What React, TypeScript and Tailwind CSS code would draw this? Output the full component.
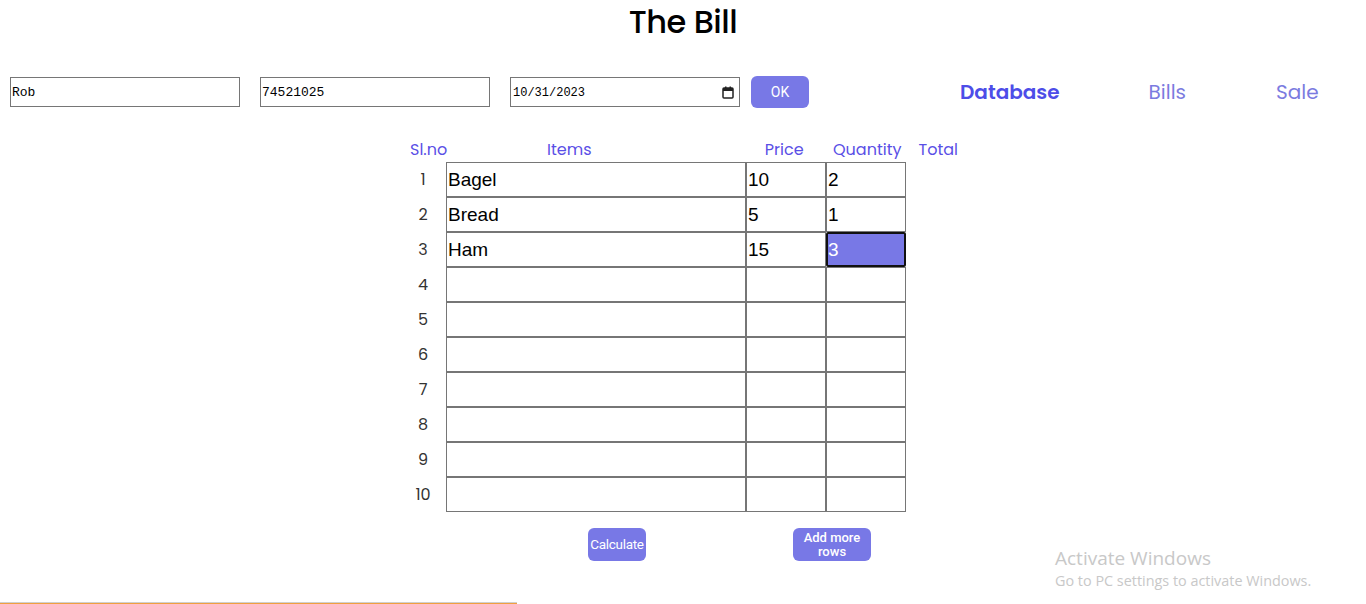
import React from "react"

const rows = [
    { item: "Bagel", price: "10", qty: "2" },
    { item: "Bread", price: "5", qty: "1" },
    { item: "Ham", price: "15", qty: "3" },
    { item: "", price: "", qty: "" },
    { item: "", price: "", qty: "" },
    { item: "", price: "", qty: "" },
    { item: "", price: "", qty: "" },
    { item: "", price: "", qty: "" },
    { item: "", price: "", qty: "" },
    { item: "", price: "", qty: "" },
]

const poppins = "font-['Poppins','Inter','Noto_Sans',sans-serif]"
const cell = "h-[35px] border border-[#767676] bg-white px-[1px] pt-[1px] font-['Liberation_Sans',Arial,sans-serif] text-[19px] text-black outline-none"

export default function App() {
    return (
        <div className="relative h-[604px] w-[1366px] overflow-hidden bg-white">
            <h1 className={`${poppins} pt-[2px] text-center text-[32px] font-medium leading-[40px] tracking-[-0.5px] text-black`}>
                The Bill
            </h1>

            <div className="mt-[34px] flex items-center pl-[10px]">
                <input
                    defaultValue="Rob"
                    className="h-[30px] w-[230px] border border-[#767676] px-[1px] font-['Liberation_Mono',monospace] text-[13px] text-black"
                />
                <input
                    defaultValue="74521025"
                    className="ml-[20px] h-[30px] w-[230px] border border-[#767676] px-[1px] font-['Liberation_Mono',monospace] text-[13px] text-black"
                />
                <div className="ml-[20px] flex h-[30px] w-[230px] items-center justify-between border border-[#767676] pl-[2px] pr-[5px] font-['Liberation_Mono',monospace] text-[12px] text-black">
                    <span className="pt-[2px]">10/31/2023</span>
                    <svg width="12" height="13" viewBox="0 0 12 13" fill="none">
                        <rect x="1" y="2" width="10" height="10" rx="1" stroke="#222" strokeWidth="1.5" />
                        <rect x="1" y="2" width="10" height="3" fill="#222" />
                        <rect x="3" y="0.5" width="1.5" height="2.5" fill="#222" />
                        <rect x="7.5" y="0.5" width="1.5" height="2.5" fill="#222" />
                    </svg>
                </div>
                <button className="ml-[11px] h-[32px] w-[58px] rounded-[6px] bg-[#7878e6] font-['Roboto',sans-serif] text-[14px] text-white">
                    OK
                </button>

                <nav className={`${poppins} ml-[151px] flex items-center text-[20px]`}>
                    <a className="font-semibold text-[#4d4de8]">Database</a>
                    <a className="ml-[89px] text-[#7b7be0]">Bills</a>
                    <a className="ml-[90px] text-[#7b7be0]">Sale</a>
                </nav>
            </div>

            <div className="mt-[29px] flex justify-center">
                <div className="ml-[2px] w-[548px]">
                    <div className={`${poppins} flex h-[25px] items-center text-[16px] text-[#5a4fe6]`}>
                        <span className="w-[36px]">Sl.no</span>
                        <span className="w-[300px] pr-[52px] text-center">Items</span>
                        <span className="w-[80px] text-center">Price</span>
                        <span className="w-[80px] pl-[7px] text-center">Quantity</span>
                        <span className="pl-[15px]">Total</span>
                    </div>
                    {rows.map((r, i) => (
                        <div key={i} className="flex">
                            <span className={`${poppins} flex w-[36px] items-center justify-center pr-[10px] text-[16px] text-[#333]`}>
                                {i + 1}
                            </span>
                            <input defaultValue={r.item} className={`${cell} w-[300px]`} />
                            <input defaultValue={r.price} className={`${cell} w-[80px]`} />
                            {i === 2 ? (
                                <div className="flex h-[35px] w-[80px] items-center rounded-[2px] border-2 border-[#111] bg-[#7878e6] pt-[1px] font-['Liberation_Sans',Arial,sans-serif] text-[19px] text-white">
                                    {r.qty}
                                </div>
                            ) : (
                                <input defaultValue={r.qty} className={`${cell} w-[80px]`} />
                            )}
                        </div>
                    ))}
                </div>
            </div>

            <div className="mt-[16px] flex font-['Roboto',sans-serif] text-[13px] font-medium text-white">
                <button className="ml-[588px] h-[33px] w-[58px] rounded-[6px] bg-[#7878e6] text-[13.5px] font-normal tracking-[-0.3px]">
                    Calculate
                </button>
                <button className="ml-[147px] h-[33px] w-[78px] rounded-[6px] bg-[#7878e6] leading-[14px]">
                    Add more
                    <br />
                    rows
                </button>
            </div>

            <div className="absolute left-[1055px] top-[545px] font-['Open_Sans',sans-serif] text-[#c8c8c8]">
                <div className="text-[19px] leading-[26px]">Activate Windows</div>
                <div className="text-[14.4px] leading-[20px]">Go to PC settings to activate Windows.</div>
            </div>

            <div className="absolute bottom-0 left-0 w-[517px]">
                <div className="h-[1px] bg-[#d0d0d0]" />
                <div className="h-[1px] bg-[#f0a040]" />
            </div>
        </div>
    )
}
